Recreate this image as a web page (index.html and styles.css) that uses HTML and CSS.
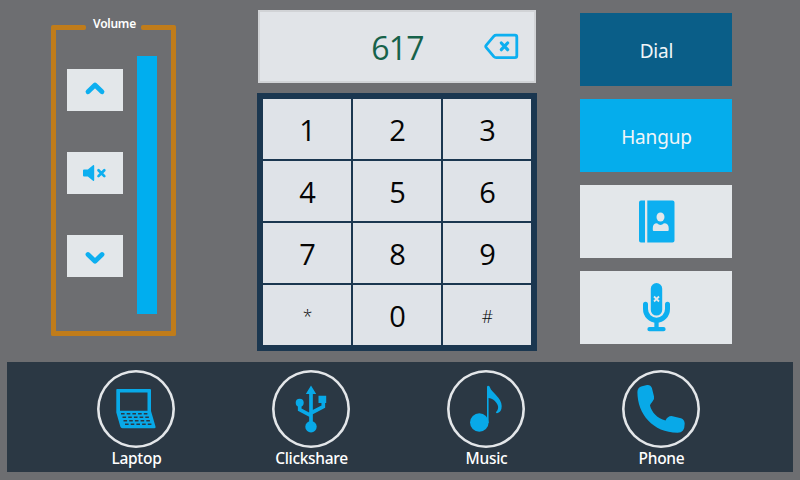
FILE: index.html
```
<!DOCTYPE html>
<html lang="en">
<head>
<meta charset="utf-8">
<title>Phone</title>
<link rel="stylesheet" href="styles.css">
</head>
<body>
<main class="panel">
  <section class="volume">
    <div class="volume-head"><span class="cap"></span><h2>Volume</h2><span class="cap"></span></div>
    <div class="volume-body">
      <div class="volume-buttons">
        <button aria-label="Volume up"><svg width="56" height="42" viewBox="0 0 56 42"><path class="line" d="M21 22.8L28 16.1L35 22.8" stroke-width="4.8"/></svg></button>
        <button aria-label="Mute"><svg width="56" height="42" viewBox="0 0 56 42"><path class="fill" d="M17 17.5h3.8l5.2-4.3q1.2-.7 1.2.7v14.2q0 1.3-1.2.6l-5.2-4.3H17q-1 0-1-1v-4.9q0-1 1-1z"/><path class="line" d="M31.500 18.300L37.300 24.100M37.300 18.300L31.500 24.100" stroke-width="2.700"/></svg></button>
        <button aria-label="Volume down"><svg width="56" height="42" viewBox="0 0 56 42"><path class="line" d="M21 19.500L28 26.200L35 19.500" stroke-width="4.8"/></svg></button>
      </div>
      <div class="level"></div>
    </div>
  </section>

  <section class="dialer">
    <div class="display">
      <span class="number">617</span>
      <svg class="erase" width="36" height="28" viewBox="0 0 36 28"><path class="line" d="M12.200 2.200H31Q32.800 2.200 32.800 4V22.800Q32.800 24.600 31 24.600H12.200Q10.800 24.600 9.900 23.600L2.300 14.700Q1.200 13.400 2.300 12.100L9.900 3.200Q10.800 2.200 12.200 2.200Z" stroke-width="2.800"/><path class="line" d="M17.300 10L23.600 16.700M23.600 10L17.300 16.700" stroke-width="3.200"/></svg>
    </div>
    <div class="keypad">
      <button>1</button><button>2</button><button>3</button>
      <button>4</button><button>5</button><button>6</button>
      <button>7</button><button>8</button><button>9</button>
      <button class="small">*</button><button>0</button><button class="small">#</button>
    </div>
  </section>

  <section class="actions">
    <button class="dial">Dial</button>
    <button class="hangup">Hangup</button>
    <button aria-label="Contacts"><svg width="152" height="73" viewBox="0 0 152 73"><path class="fill" d="M61 15.600H65V57.500H61Q59 57.500 59 55.500V17.600Q59 15.600 61 15.600ZM67.300 15.600H92.500Q94.500 15.600 94.500 17.600V55.500Q94.500 57.500 92.500 57.500H67.300Z"/><ellipse class="hole" cx="80.500" cy="32" rx="4" ry="4.500"/><path class="hole" d="M73.800 46Q72.800 46 72.800 45V43Q72.800 38.500 77 38.300Q80.500 41.500 84 38.300Q88.700 38.500 88.700 43V45Q88.700 46 87.700 46Z"/></svg></button>
    <button aria-label="Mute microphone"><svg width="152" height="73" viewBox="0 0 152 73"><rect class="fill" x="70.800" y="12" width="11.400" height="32.600" rx="5.700"/><path class="line" d="M65.500 33.200V38C65.500 44.500 70.500 49.300 76.500 49.300S87.500 44.500 87.500 38V33.200" stroke-width="5"/><path class="line" d="M76.500 50V57M69.500 58.200H83.500" stroke-width="4.300"/><path class="cross" d="M74 25.500L79 30.500M79 25.500L74 30.500"/></svg></button>
  </section>
</main>

<nav class="sources">
  <a class="source"><span class="ring"><svg width="78" height="78" viewBox="0 0 78 78"><path class="fill" fill-rule="evenodd" d="M20 19H53Q54 19 54 20V41L58.500 56.500Q59 58.300 57.500 58.300H25.500Q23.800 58.300 23.300 56.500L19.300 42.500V20Q19.300 19 20 19ZM23 22.500V40.800H50.500V22.500Z"/><path class="keys" d="M24 43.800H52M25.500 47.300H53M26.500 50.700H54M28 54.200H55.500"/></svg></span><span class="label">Laptop</span></a>
  <a class="source"><span class="ring"><svg width="78" height="78" viewBox="0 0 78 78"><path class="fill" d="M39 15.500L44.200 24H33.800ZM46.500 25.700H54.200V33H46.500Z"/><circle class="fill" cx="27.700" cy="32.700" r="4"/><circle class="fill" cx="39" cy="56.700" r="5.700"/><path class="line sharp" d="M39 22V55M27.700 33V39.600L39 45.700M51.300 31V36.700L39 43" stroke-width="3.700"/></svg></span><span class="label">Clickshare</span></a>
  <a class="source"><span class="ring"><svg width="78" height="78" viewBox="0 0 78 78"><circle class="fill" cx="32.300" cy="52.500" r="9.300"/><path class="fill" d="M40 17Q40 15.700 41.300 15.700Q42.600 15.700 43 17.500C44.500 22.500 54.700 27.500 54.700 36Q54.700 41.500 50.800 43Q49.300 43.500 49 42.500Q48.900 41.700 50 41Q52.500 37 49.500 33Q46.500 28.500 41.600 28V53H40Z"/></svg></span><span class="label">Music</span></a>
  <a class="source"><span class="ring"><svg width="78" height="78" viewBox="0 0 78 78"><path class="fill" d="M20 16.300L25 15Q28.500 14.500 29.900 18L32 26.500Q32.700 29.500 30.500 31.500Q28.700 33.500 28 35.500C29.500 42 35.500 48.700 43.500 50.500Q45.500 46 49.500 46L59 48.300Q62.500 49.500 62.700 53.500Q62.700 58 61 60.500Q59.300 62.700 55.500 62.700C31 62.700 15.400 44 15.400 22Q15.400 17.500 20 16.300Z"/></svg></span><span class="label">Phone</span></a>
</nav>
</body>
</html>
```
FILE: styles.css
```
* { box-sizing: border-box; }

body {
  margin: 0;
  width: 800px;
  height: 480px;
  background: #6d6e71;
  font-family: "Noto Sans", "Open Sans", sans-serif;
}

button {
  display: flex;
  align-items: center;
  justify-content: center;
  padding: 0;
  border: 0;
  background: #e3e7ea;
  font-family: inherit;
}

svg { display: block; flex: none; }
.fill { fill: #0daff0; }
.hole { fill: #e3e7ea; }
.line {
  fill: none;
  stroke: #0daff0;
  stroke-linecap: round;
  stroke-linejoin: round;
}
.sharp { stroke-linecap: butt; stroke-linejoin: miter; }
.cross { fill: none; stroke: #e3e7ea; stroke-width: 1.8; }
.keys { fill: none; stroke: #2b3844; stroke-width: 1.4; stroke-dasharray: 3.600 2.100; }

.panel {
  display: flex;
  align-items: flex-start;
  height: 362px;
  padding-left: 51px;
}

/* Volume */
.volume { width: 125px; margin-top: 25px; }
.volume-head { display: flex; justify-content: space-between; height: 5px; }
.cap { width: 35px; height: 5px; background: #c07c1a; border-radius: 2px; }
.volume h2 {
  margin: -10px 0 0 2px;
  color: #fff;
  font-size: 12px;
  font-weight: 600;
  line-height: 18px;
  letter-spacing: -0.250px;
}
.volume-body {
  display: flex;
  gap: 14px;
  height: 308px;
  margin-top: -2px;
  padding: 28px 0 0 11px;
  border: solid #c07c1a;
  border-width: 0 5px 5px;
  border-radius: 0 0 2px 2px;
}
.volume-buttons {
  display: flex;
  flex-direction: column;
  gap: 41px;
  padding-top: 13px;
}
.volume-buttons button { width: 56px; height: 42px; }
.level { width: 20px; height: 258px; background: #00aeef; }

/* Dialer */
.dialer { width: 280px; margin: 10px 0 0 81px; }
.display {
  position: relative;
  display: flex;
  align-items: center;
  justify-content: center;
  width: 278px;
  height: 73px;
  margin: 0 1px 10px;
  border: 2px solid #d1d3d6;
  background: #e1e4e8;
}
.number {
  padding: 1px 0 0 1px;
  color: #17624a;
  font-family: "Open Sans", sans-serif;
  font-size: 32px;
  font-weight: 370;
  letter-spacing: -0.800px;
}
.erase { position: absolute; left: 224px; top: 21px; }
.keypad {
  display: grid;
  grid-template-columns: repeat(3, 88px);
  grid-auto-rows: 60px;
  gap: 2px;
  border: 6px solid #1b3750;
  background: #1b3750;
}
.keypad button {
  padding: 0 0 0 1px;
  background: #dfe3e8;
  color: #050505;
  font-family: "Open Sans", sans-serif;
  font-size: 29px;
  font-weight: 370;
}
.keypad .small { padding-top: 2px; font-size: 17.500px; font-weight: 350; }

/* Call actions */
.actions {
  display: grid;
  grid-auto-rows: 73px;
  gap: 13px;
  width: 152px;
  margin: 13px 0 0 43px;
}
.actions button { padding: 2px 0 0 1px; font-size: 19px; color: #f0f5f8; letter-spacing: -0.150px; }
.actions button[aria-label] { padding: 0; }
.actions .dial { background: #0a5e88; }
.actions .hangup { background: #05adec; }

/* Source bar */
.sources {
  display: grid;
  grid-template-columns: repeat(4, 175px);
  width: 786px;
  height: 110px;
  margin-left: 7px;
  padding: 8px 0 0 41.500px;
  background: #2b3844;
}
.sources .fill { fill: #08a9e8; }
.sources .line { stroke: #08a9e8; }
.source {
  display: flex;
  flex-direction: column;
  align-items: center;
}
.label {
  padding-left: 1px;
  color: #fff;
  font-size: 15.500px;
  font-weight: 550;
  line-height: 20px;
  letter-spacing: -0.300px;
}
.ring {
  width: 78px;
  height: 78px;
  border-radius: 50%;
  box-shadow: inset 0 0 0 2.600px #e3e6e9;
}
```
